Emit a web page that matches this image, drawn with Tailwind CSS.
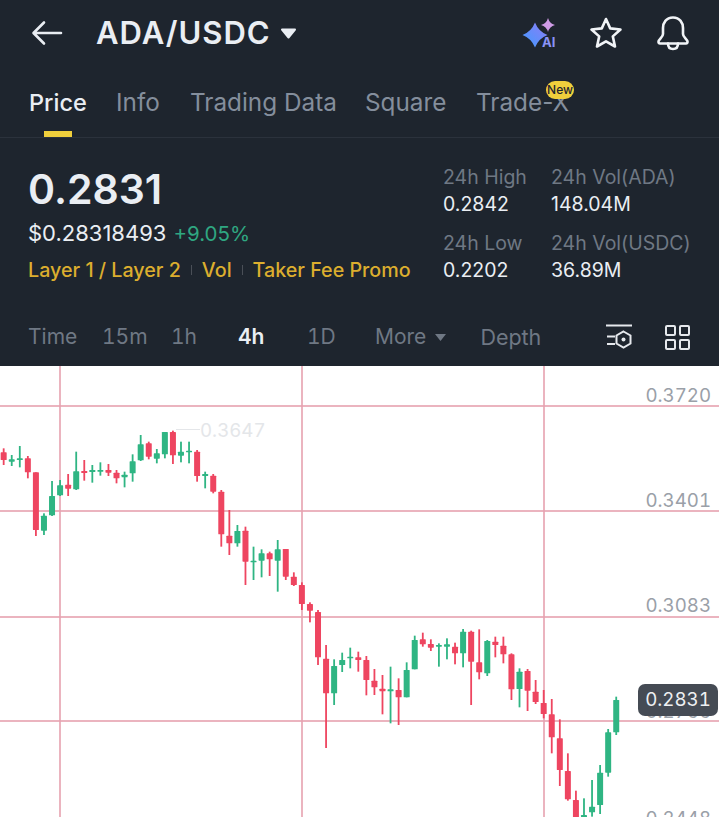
<!DOCTYPE html>
<html lang="en">
<head>
    <meta charset="UTF-8">
    <title>ADA/USDC</title>
    <script src="https://cdn.jsdelivr.net/npm/@tailwindcss/browser@4"></script>
</head>
<body class="bg-[#1e252e] font-['Inter',sans-serif]">
<div class="w-[719px] h-[817px] overflow-hidden flex flex-col">
    <!-- Title bar -->
    <div class="h-[66px] flex items-center pl-[31px] shrink-0">
        <svg width="32" height="26" viewBox="0 0 32 26" fill="none" stroke="#e9edf2" stroke-width="2.6" stroke-linecap="round" stroke-linejoin="round"><path d="M3 13H30M13 2.500L2.500 13L13 23.500"/></svg>
        <span class="ml-[33px] text-[31px] font-semibold tracking-[1px] text-[#eaeef3]">ADA/USDC</span>
        <svg class="ml-[9px]" width="17" height="11" viewBox="0 0 17 11"><path d="M2 1.500H15L8.500 9.500Z" fill="#eaeef3" stroke="#eaeef3" stroke-width="2" stroke-linejoin="round"/></svg>
        <div class="relative ml-auto mr-[31px] w-[36px] h-[32px]">
            <svg width="36" height="32" viewBox="0 0 36 32" class="absolute inset-0">
                <defs><linearGradient id="g" x1="0" y1="1" x2="1" y2="0"><stop offset="0" stop-color="#3f9bff"/><stop offset="1" stop-color="#8f7cf5"/></linearGradient></defs>
                <path d="M13 5.500Q16.500 14.500 25.500 18Q16.500 21.500 13 30.500Q9.500 21.500 .5 18Q9.500 14.500 13 5.500Z" fill="url(#g)"/>
                <path d="M26 1Q27.500 6.500 33 8Q27.500 9.500 26 15Q24.500 9.500 19 8Q24.500 6.500 26 1Z" fill="#cf9ce6"/>
            </svg>
            <span class="absolute left-[20px] top-[18px] text-[13px] leading-[15px] font-bold text-[#8a93f5]">AI</span>
        </div>
        <svg class="mr-[33px]" width="34" height="34" viewBox="0 0 34 34" fill="none" stroke="#f1f4f7" stroke-width="2.600" stroke-linejoin="round"><path d="M17 3L21.200 12.400L31.500 13.500L23.800 20.400L26 30.500L17 25.300L8 30.500L10.200 20.400L2.500 13.500L12.800 12.400Z"/></svg>
        <svg class="mr-[29px]" width="34" height="36" viewBox="0 0 34 36" fill="none" stroke="#f1f4f7" stroke-width="2.600" stroke-linejoin="round" stroke-linecap="round"><path d="M17 2.500C10 2.500 7 8 7 13V19C7 22 3 24 2.500 26.500C2.300 27.500 3 28.500 4 28.500H30C31 28.500 31.700 27.500 31.500 26.500C31 24 27 22 27 19V13C27 8 24 2.500 17 2.500Z"/><path d="M12 28.500C12 32 14 34 17 34C20 34 22 32 22 28.500"/></svg>
    </div>

    <!-- Tabs -->
    <div class="h-[72px] shrink-0 border-b border-[#2b323c] flex items-start pl-[29px] pt-[20px] text-[24.3px] leading-[33px] text-[#848e9c] relative">
        <div class="w-[87px] relative h-[51px]">
            <span class="font-medium text-[23.5px] text-[#eaeef3]">Price</span>
            <div class="absolute left-[15px] bottom-0 w-[28px] h-[6px] bg-[#f0cf3c]"></div>
        </div>
        <span class="w-[74px]">Info</span>
        <span class="w-[175px]">Trading Data</span>
        <span class="w-[111px]">Square</span>
        <span class="relative">Trade-X
            <span class="absolute left-[70px] top-[-5px] w-[28px] h-[18px] rounded-[9px] bg-[#f0cf3c] text-[12px] leading-[18px] text-center font-medium text-[#1e2530]">New</span>
        </span>
    </div>

    <!-- Price stats -->
    <div class="h-[182px] shrink-0 flex pl-[28px]">
        <div class="w-[415px] shrink-0">
            <div class="mt-[26px] text-[41px] leading-[50px] font-semibold text-[#eaeef3]">0.2831</div>
            <div class="mt-[5px] text-[22px] leading-[28px]"><span class="text-[#eaeef3]">$0.28318493</span><span class="ml-[7px] text-[20.5px] text-[#2fa781]">+9.05%</span></div>
            <div class="mt-[9px] flex items-center text-[19.7px] leading-[26px] font-medium text-[#dcae2e]">
                <span>Layer 1 / Layer 2</span>
                <span class="mx-[10px] w-px h-[10px] bg-[#4a4f57]"></span>
                <span>Vol</span>
                <span class="mx-[10px] w-px h-[10px] bg-[#4a4f57]"></span>
                <span>Taker Fee Promo</span>
            </div>
        </div>
        <div class="grid grid-cols-[108px_1fr] grid-rows-[66px_66px] mt-[26px] text-[19.5px] leading-[27px]">
            <div><div class="text-[#6f7884]">24h High</div><div class="text-[#eaeef3]">0.2842</div></div>
            <div><div class="text-[#6f7884]">24h Vol(ADA)</div><div class="text-[#eaeef3]">148.04M</div></div>
            <div><div class="text-[#6f7884]">24h Low</div><div class="text-[#eaeef3]">0.2202</div></div>
            <div><div class="text-[#6f7884]">24h Vol(USDC)</div><div class="text-[#eaeef3]">36.89M</div></div>
        </div>
    </div>

    <!-- Interval toolbar -->
    <div class="h-[46px] shrink-0 flex items-center pl-[28px] pb-[12px] text-[21px] tabular-nums text-[#6f7884]">
        <span class="w-[74px]">Time</span>
        <span class="w-[69px]">15m</span>
        <span class="w-[67px]">1h</span>
        <span class="w-[69px] font-semibold text-[#eaeef3]">4h</span>
        <span class="w-[68px]">1D</span>
        <span>More</span>
        <svg class="ml-[8px]" width="13" height="9" viewBox="0 0 13 9"><path d="M1 1H12L6.500 8Z" fill="#6f7884"/></svg>
        <span class="ml-[33px] text-[21.5px]">Depth</span>
        <svg class="ml-auto" width="28" height="26" viewBox="0 0 28 26" fill="none" stroke="#e6e9ed" stroke-width="2"><path d="M1 1.500H27M2 12.500H10M2 20H10"/><path d="M18.500 7.500L25.500 11.500V19.500L18.500 23.500L11.500 19.500V11.500Z"/><circle cx="18.500" cy="15.500" r="2" fill="#e6e9ed" stroke="none"/></svg>
        <div class="ml-[32px] mr-[29px] grid grid-cols-2 gap-[3px]">
            <div class="w-[11px] h-[11px] border-2 border-[#e6e9ed] rounded-[2px]"></div>
            <div class="w-[11px] h-[11px] border-2 border-[#e6e9ed] rounded-[2px]"></div>
            <div class="w-[11px] h-[11px] border-2 border-[#e6e9ed] rounded-[2px]"></div>
            <div class="w-[11px] h-[11px] border-2 border-[#e6e9ed] rounded-[2px]"></div>
        </div>
    </div>

    <!-- Chart -->
    <div class="relative flex-1 bg-white overflow-hidden text-[18.7px] leading-[22px] tabular-nums text-[#9aa0a8]">
        <svg id="chart" width="719" height="451" class="absolute inset-0"></svg>
        <span class="absolute right-[8px] top-[19px]">0.3720</span>
        <span class="absolute right-[8px] top-[124px]">0.3401</span>
        <span class="absolute right-[8px] top-[229px]">0.3083</span>
        <span class="absolute right-[8px] top-[335px]">0.2766</span>
        <span class="absolute right-[8px] top-[442px]">0.2448</span>
        <span class="absolute left-[200px] top-[54px] text-[#e4e6e9]">0.3647</span>
        <span class="absolute left-[638px] top-[318px] w-[80px] h-[32px] rounded-[7px] bg-[#454b54] text-[#eef0f2] text-center leading-[32px]">0.2831</span>
    </div>
</div>

<script>
    // [color, wick top, body top, body bottom, wick bottom, scale] read off the reference crops
    const R = '#ee4560', G = '#2fb583';
    const z5 = (y) => y / 3 + 410, z6 = (y) => y / 3 + 470, z7 = (y) => y / 3 + 610;
    const candles = [
        [R,115,127,150,165,z5],[G,135,148,155,168,z5],[G,108,145,150,172,z5],[R,138,145,187,205,z5],
        [R,187,187,360,378,z5],[G,310,317,362,375,z5],[G,213,258,316,318,z5],[G,210,226,256,258,z5],
        [R,192,224,236,258,z5],[G,125,184,238,240,z5],[R,150,183,189,212,z5],[G,165,180,186,218,z5],
        [G,157,180,185,197,z5],[R,162,180,188,198,z5],[R,180,188,205,220,z5],[G,185,194,202,232,z5],
        [G,133,154,190,215,z5],[G,75,103,151,153,z5],[R,95,100,140,148,z5],[G,117,130,146,160,z5],
        [G,66,66,133,145,z5],[R,62,66,136,162,z5],[G,95,125,137,157,z5],[G,95,122,127,160,z5],
        [R,120,125,198,215,z5],[G,185,192,198,235,z5],[R,192,197,245,250,z5],[R,240,245,373,410,z5],
        [R,300,377,400,435,z5],
        [G,165,183,220,230,z6],[R,170,182,275,345,z6],[G,230,272,277,330,z6],[G,238,250,272,322,z6],
        [R,245,250,268,318,z6],[G,210,238,272,365,z6],[R,237,237,320,330,z6],[R,307,320,345,348,z6],
        [R,337,345,402,420,z6],[R,397,402,422,457,z6],[R,420,426,562,585,z6],[R,525,566,670,834,z6],
        [G,568,588,670,705,z6],[G,548,570,585,606,z6],[G,533,560,565,595,z6],[R,545,562,570,605,z6],
        [R,558,570,630,676,z6],[R,597,632,652,675,z6],[R,615,656,664,733,z6],[G,590,658,664,760,z6],
        [R,625,660,682,765,z6],[G,577,600,682,682,z6],[G,497,510,598,598,z6],
        [R,68,88,103,110,z7],[R,88,102,113,123,z7],[G,100,105,110,170,z7],[G,85,103,110,148,z7],
        [R,98,110,130,163,z7],[G,57,65,130,172,z7],[R,62,65,155,285,z7],[R,58,157,187,208,z7],
        [G,90,93,190,198,z7],[R,80,95,105,142,z7],[R,80,107,133,160,z7],[R,130,133,238,270,z7],
        [G,175,185,237,292,z7],[R,177,183,242,303,z7],[R,210,245,276,282,z7],[R,240,279,312,325,z7],
        [R,267,313,382,430,z7],[R,328,385,480,528,z7],[R,430,483,568,572,z7],[R,542,570,640,640,z7],
        [G,565,615,640,640,z7],[G,510,590,607,620,z7],[G,465,488,585,612,z7],[G,357,367,488,500,z7],
        [G,260,270,367,375,z7]
    ];
    const top0 = 366;
    let out = '';
    // grid lines
    [406, 511, 617, 721].forEach(y => out += `<rect x="0" y="${y - top0 - 0.8}" width="719" height="1.6" fill="#e6a2b0"/>`);
    [60, 302, 544].forEach(x => out += `<rect x="${x - 0.8}" y="0" width="1.6" height="451" fill="#e6a2b0"/>`);
    // high marker
    out += `<rect x="176" y="${429 - top0}" width="24" height="1" fill="#e4e6e9"/>`;
    candles.forEach((c, i) => {
        const [color, wt, bt, bb, wb, f] = c;
        const x = 3.67 + i * 8.06;
        const yy = v => f(v) - top0;
        out += `<rect x="${x - 0.9}" y="${yy(wt)}" width="1.8" height="${yy(wb) - yy(wt)}" fill="${color}"/>`;
        out += `<rect x="${x - 3}" y="${yy(bt)}" width="6" height="${Math.max(yy(bb) - yy(bt), 1.5)}" rx="0.6" fill="${color}"/>`;
    });
    document.getElementById('chart').innerHTML = out;
</script>
</body>
</html>
